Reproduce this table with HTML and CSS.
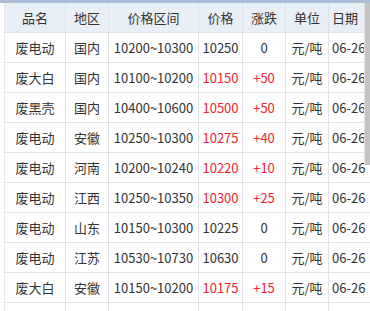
FILE: index.html
```html
<!DOCTYPE html>
<html lang="zh">
<head>
<meta charset="utf-8">
<link rel="stylesheet" href="styles.css">
</head>
<body>
<div class="frame">
  <div class="topbar"></div>
  <table class="grid">
    <colgroup>
      <col class="c1"><col class="c2"><col class="c3"><col class="c4"><col class="c5"><col class="c6"><col class="c7">
    </colgroup>
    <thead>
      <tr><th>品名</th><th>地区</th><th>价格区间</th><th>价格</th><th>涨跌</th><th>单位</th><th>日期</th></tr>
    </thead>
    <tbody>
      <tr><td>废电动</td><td>国内</td><td>10200~10300</td><td>10250</td><td>0</td><td>元/吨</td><td>06-26</td></tr>
      <tr><td>废大白</td><td>国内</td><td>10100~10200</td><td class="up">10150</td><td class="up">+50</td><td>元/吨</td><td>06-26</td></tr>
      <tr><td>废黑壳</td><td>国内</td><td>10400~10600</td><td class="up">10500</td><td class="up">+50</td><td>元/吨</td><td>06-26</td></tr>
      <tr><td>废电动</td><td>安徽</td><td>10250~10300</td><td class="up">10275</td><td class="up">+40</td><td>元/吨</td><td>06-26</td></tr>
      <tr><td>废电动</td><td>河南</td><td>10200~10240</td><td class="up">10220</td><td class="up">+10</td><td>元/吨</td><td>06-26</td></tr>
      <tr><td>废电动</td><td>江西</td><td>10250~10350</td><td class="up">10300</td><td class="up">+25</td><td>元/吨</td><td>06-26</td></tr>
      <tr><td>废电动</td><td>山东</td><td>10150~10300</td><td>10225</td><td>0</td><td>元/吨</td><td>06-26</td></tr>
      <tr><td>废电动</td><td>江苏</td><td>10530~10730</td><td>10630</td><td>0</td><td>元/吨</td><td>06-26</td></tr>
      <tr><td>废大白</td><td>安徽</td><td>10150~10200</td><td class="up">10175</td><td class="up">+15</td><td>元/吨</td><td>06-26</td></tr>
      <tr><td></td><td></td><td></td><td></td><td></td><td></td><td></td></tr>
    </tbody>
  </table>
  <div class="scrollthumb"></div>
</div>
</body>
</html>
```
FILE: styles.css
```css
html, body {
  margin: 0;
  padding: 0;
  background: #ffffff;
}
body {
  font-family: "Noto Sans CJK SC", "Noto Sans", sans-serif;
  font-size: 13px;
  color: #333333;
}
.frame {
  position: relative;
  width: 370px;
  height: 311px;
  overflow: hidden;
}
.topbar {
  height: 3px;
  background: #a9bdd9;
}
.grid {
  margin-left: 4px;
  border-collapse: collapse;
  table-layout: fixed;
  width: 412px;
}
.c1 { width: 61px; }
.c2 { width: 43px; }
.c3 { width: 90px; }
.c4 { width: 44px; }
.c5 { width: 43px; }
.c6 { width: 43px; }
.c7 { width: 88px; }
.grid th,
.grid td {
  height: 29px;
  padding: 0;
  border: 1px solid #dfe2ea;
  text-align: center;
  white-space: nowrap;
  font-weight: normal;
  line-height: 29px;
}
.grid th:first-child,
.grid td:first-child {
  border-left: 1px solid #e3e6ee;
}
.grid th:last-child,
.grid td:last-child {
  text-align: left;
  padding-left: 3px;
}
.grid thead th {
  background: #e9eff7;
  border-top: 0;
}
.grid .up {
  color: #f0232f;
}
.scrollthumb {
  position: absolute;
  right: 0;
  top: 3px;
  width: 5px;
  height: 162px;
  background: #c3c3c3;
  border-left: 1px solid #e2e2e2;
}
```
